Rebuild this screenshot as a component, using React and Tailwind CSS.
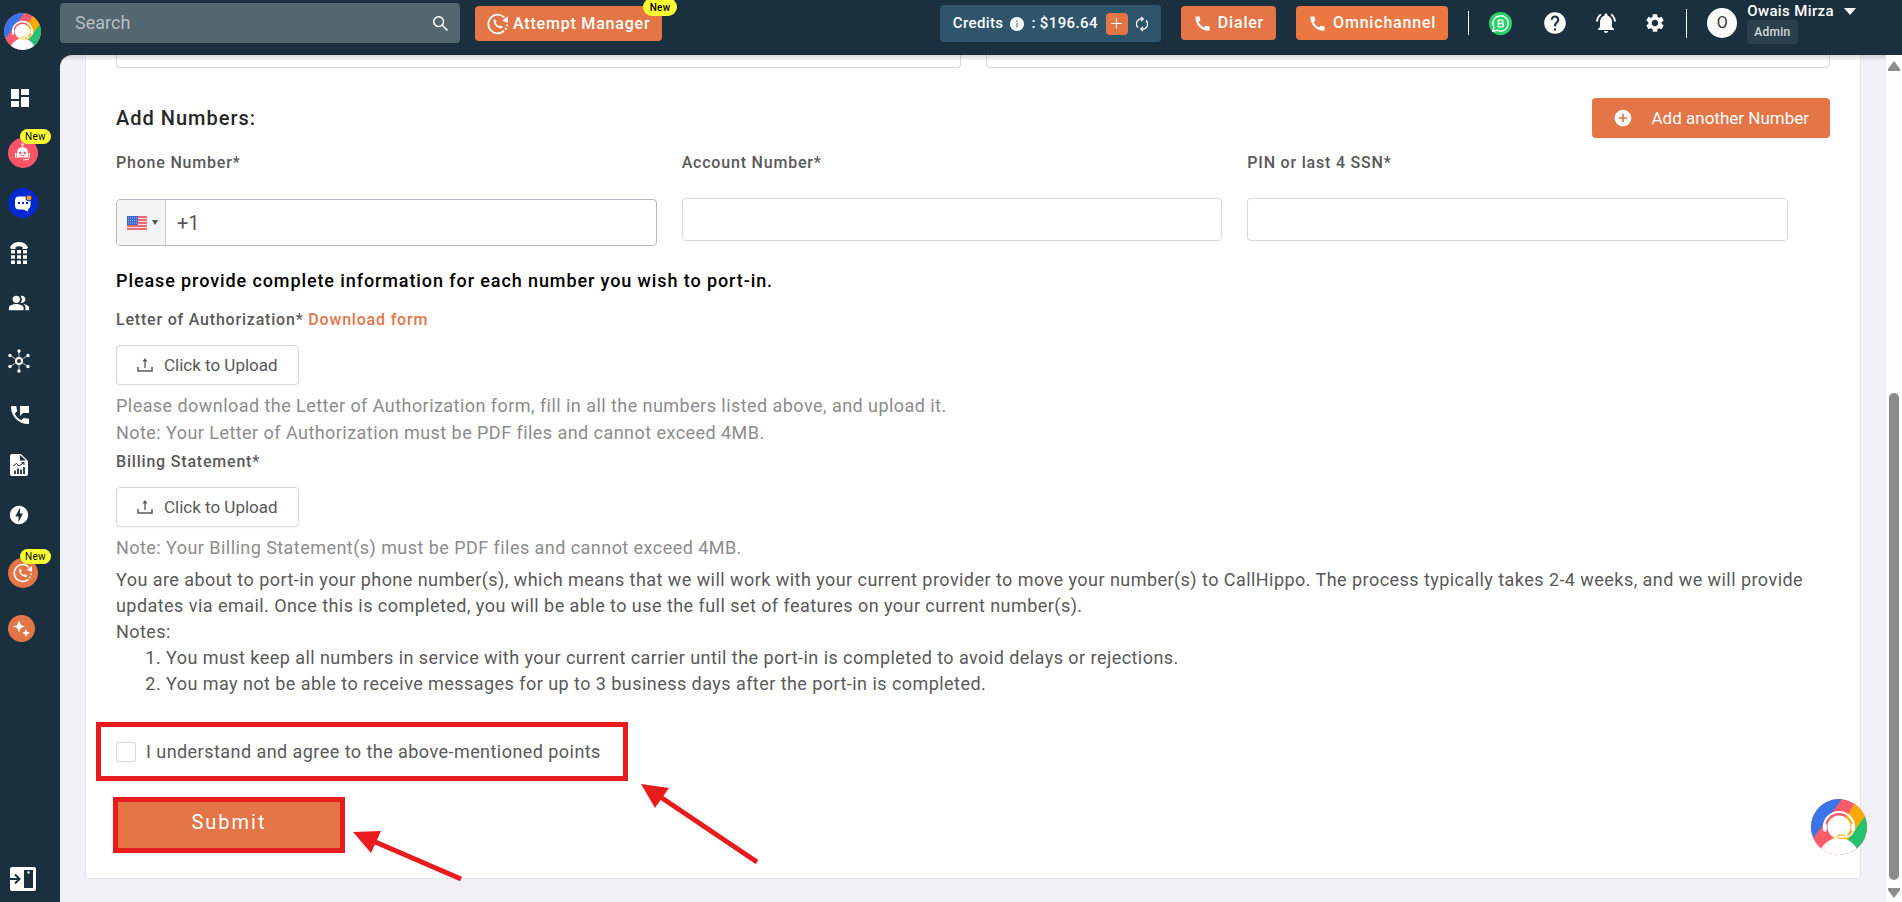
import React, { useState } from "react";
import {
  MdDashboard,
  MdPeopleAlt,
  MdPermPhoneMsg,
  MdCall,
  MdHelp,
  MdNotificationsActive,
  MdSettings,
  MdAddCircle,
  MdOfflineBolt,
} from "react-icons/md";
import { AiOutlineSearch, AiFillInfoCircle, AiOutlinePlus } from "react-icons/ai";

const LogoMark = ({ id, className }) => (
  <svg viewBox="0 0 56 56" className={className} aria-hidden="true">
    <defs>
      <clipPath id={id}>
        <circle cx="28" cy="28" r="28" />
      </clipPath>
    </defs>
    <g clipPath={`url(#${id})`}>
      <rect width="56" height="56" fill="#ff5b6b" />
      <path d="M0 0H31L3 38L0 40Z" fill="#3b73e8" />
      <path d="M44 4L55 16L32 50H14Z" fill="#ffaa00" />
      <path d="M54 17L60 14V60H26L34 45Z" fill="#25c16f" />
      <path d="M10 50C14 43 20 39 28 39S42 43 46 50V60H10Z" fill="#fff" />
      <circle cx="28" cy="28" r="11.500" fill="#fff" />
      <path d="M13 31V28A15 15 0 0 1 43 28V31" fill="none" stroke="#fff" strokeWidth="2.200" strokeLinecap="round" />
      <path d="M14 26V31M42 26V31" stroke="#fff" strokeWidth="3.500" strokeLinecap="round" />
      <path d="M42 33Q40 38 33 38" fill="none" stroke="#fff" strokeWidth="1.500" />
      <rect x="26.500" y="36" width="7" height="3.500" rx="1.700" fill="#fff" stroke="#ffaa00" />
    </g>
  </svg>
);

const RedialIcon = ({ className }) => (
  <svg viewBox="0 0 24 24" className={className} fill="none" stroke="currentColor" strokeWidth="2" aria-hidden="true">
    <path d="M18 20A10.200 10.200 0 1 1 18.500 4.500" strokeLinecap="round" />
    <path d="M22 12.500A10 10 0 0 1 19 19" strokeDasharray="2 2" />
    <path d="M22.800 3.500V10.500L16.500 8.500Z" fill="currentColor" stroke="none" />
    <path
      d="M7 8.200C7.500 13 11 16.500 15.800 17L17.300 15.400L14.800 13.500L13.300 14.500C11.500 13.700 10.300 12.500 9.500 10.700L10.500 9.200L8.600 6.700Z"
      fill="currentColor"
      stroke="none"
    />
  </svg>
);

const BotIcon = () => (
  <svg viewBox="0 0 30 30" className="size-[30px]" aria-hidden="true">
    <circle cx="15" cy="15" r="15" fill="#ff5566" />
    <path d="M14.500 6V10" stroke="#fff" />
    <circle cx="14.500" cy="6.500" r="1.200" fill="#fff" />
    <path d="M9 19.500V14.500A5.500 5.500 0 0 1 20 14.500V19.500Z" fill="#fff" />
    <path d="M7.700 15V19.500M21.300 15V19.500" stroke="#fff" strokeWidth="1.300" />
    <circle cx="12.300" cy="15" r="1.200" fill="#ff5566" />
    <circle cx="16.700" cy="15" r="1.200" fill="#ff5566" />
    <path d="M12.500 17.200Q14.500 18.800 16.500 17.200" stroke="#ff5566" fill="none" />
    <path d="M21.500 20Q21 22 15 22" stroke="#fff" fill="none" />
  </svg>
);

const ChatIcon = () => (
  <svg viewBox="0 0 30 30" className="size-[30px]" aria-hidden="true">
    <circle cx="15" cy="15" r="15" fill="#0529d0" />
    <path
      d="M11 8.500H18.500Q22.500 8.500 22.500 12.500V17.500Q22.500 20 20.500 20.500L19.800 23.500L15.500 21.500H11Q7 21.500 7 17.500V12.500Q7 8.500 11 8.500Z"
      fill="#fff"
    />
    <path d="M10 15H12M14 15H16M18 15H20" stroke="#0529d0" strokeWidth="2" />
    <circle cx="21" cy="10" r="3" fill="#ffa000" stroke="#0529d0" />
  </svg>
);

const KeypadIcon = () => (
  <svg viewBox="0 0 18 23" className="h-[23px] w-[18px]" fill="currentColor" aria-hidden="true">
    <path d="M0 6C1 2 5 0 9 0S17 2 18 6L16.500 7H12.500V5Q9 3.500 5.500 5V7H1.500Z" />
    <path d="M1 8H5V11.500H1ZM7 8H11V11.500H7ZM13 8H17V11.500H13ZM1 13.200H5V16.700H1ZM7 13.200H11V16.700H7ZM13 13.200H17V16.700H13ZM1 18.500H5V22H1ZM7 18.500H11V22H7ZM13 18.500H17V22H13Z" />
  </svg>
);

const FlowIcon = () => (
  <svg viewBox="0 0 22 24" className="h-6 w-[22px]" stroke="currentColor" fill="none" aria-hidden="true">
    <circle cx="11" cy="12" r="3" strokeWidth="2" />
    <path d="M11 8V3M11 16V21M7.500 10L3 7M14.500 10L19 7M7.500 14L3 17M14.500 14L19 17" strokeOpacity="0.700" />
    <g fill="currentColor" stroke="none">
      <circle cx="11" cy="2" r="1.700" />
      <circle cx="11" cy="22" r="1.700" />
      <circle cx="2" cy="6.500" r="1.700" />
      <circle cx="20" cy="6.500" r="1.700" />
      <circle cx="2" cy="17.500" r="1.700" />
      <circle cx="20" cy="17.500" r="1.700" />
    </g>
  </svg>
);

const ReportIcon = () => (
  <svg viewBox="0 0 18 22" className="h-[22px] w-[18px]" aria-hidden="true">
    <path d="M2 0H11L18 7V20Q18 22 16 22H2Q0 22 0 20V2Q0 0 2 0Z" fill="#fff" />
    <path d="M10 1V6.500H16" fill="#1b303e" />
    <path d="M3 12L6.500 9.500L9 12L14 8.500M11.500 8.500H14V11" stroke="#1b303e" fill="none" />
    <path d="M5 20V16.500M8 20V14.500M11 20V15.500M14 20V13" stroke="#1b303e" strokeWidth="1.800" />
  </svg>
);

const SparkleIcon = () => (
  <svg viewBox="0 0 27 27" className="size-[27px]" aria-hidden="true">
    <circle cx="13.500" cy="13.500" r="13.500" fill="#e37547" />
    <path d="M11 5.500L12.800 10L17 11.500L12.800 13L11 17.500L9.200 13L5 11.500L9.200 10Z" fill="#fff" />
    <path d="M18 14L19.200 16.800L22 18L19.200 19.200L18 22L16.800 19.200L14 18L16.800 16.800Z" fill="#fff" />
  </svg>
);

const PanelIcon = () => (
  <svg viewBox="0 0 26 24" className="h-6 w-[26px]" aria-hidden="true">
    <rect width="26" height="24" rx="2" fill="#fff" />
    <rect x="14" y="3" width="9" height="18" fill="#1b303e" />
    <circle cx="18.500" cy="5.500" r="1.300" fill="#fff" />
    <path d="M0 12H9M5 7.500L9.500 12L5 16.500" stroke="#1b303e" strokeWidth="2" fill="none" />
  </svg>
);

const WhatsappBusinessIcon = () => (
  <svg viewBox="0 0 24 24" className="size-[23px]" fill="none" aria-hidden="true">
    <circle cx="12" cy="12" r="12" fill="#25d366" />
    <path d="M4 20L5.200 16A8 8 0 1 1 8.300 19Z" stroke="#fff" strokeWidth="1.500" />
    <path d="M9.800 8.500H12.800A1.700 1.700 0 0 1 12.800 12H9.800ZM9.800 12H13.300A1.700 1.700 0 0 1 13.300 15.500H9.800Z" stroke="#fff" strokeWidth="1.500" />
  </svg>
);

const RefreshIcon = () => (
  <svg viewBox="0 0 12 16" className="h-4 w-3" fill="none" stroke="#fff" strokeWidth="1.300" aria-hidden="true">
    <path d="M2 11.500A5 5 0 0 1 6.500 3M10 4.500A5 5 0 0 1 5.500 13" />
    <path d="M5 1L7.200 3L5 5M7 11L4.800 13L7 15" />
  </svg>
);

const UploadIcon = () => (
  <svg viewBox="0 0 16 14" className="h-[14px] w-4" fill="none" stroke="currentColor" aria-hidden="true">
    <path d="M1 9V13H15V9" strokeWidth="1.500" />
    <path d="M8 10V2" strokeWidth="1.300" />
    <path d="M5.500 3.500L8 0L10.500 3.500Z" fill="currentColor" stroke="none" />
  </svg>
);

const UsFlag = () => (
  <svg viewBox="0 0 20 14" className="h-[14px] w-5" aria-hidden="true">
    <rect width="20" height="14" fill="#f7dfdf" />
    <path d="M0 1H20M0 4H20M0 7H20M0 10H20M0 13H20" stroke="#e8454c" strokeWidth="1.500" />
    <rect width="11" height="9" fill="#3f66cc" />
    <path d="M1 2H10M1 4.500H10M1 7H10" stroke="#a9bbea" strokeDasharray="1 1" />
  </svg>
);

const navItems = [
  { name: "Dashboard", icon: <MdDashboard size={24} /> },
  { name: "AI Bot", icon: <BotIcon />, isNew: true, space: "mt-[5px]" },
  { name: "Chat", icon: <ChatIcon /> },
  { name: "Numbers", icon: <KeypadIcon /> },
  { name: "Users", icon: <MdPeopleAlt size={22} /> },
  { name: "Integrations", icon: <FlowIcon />, space: "mt-2" },
  { name: "Call Logs", icon: <MdPermPhoneMsg size={24} />, space: "mt-1" },
  { name: "Reports", icon: <ReportIcon /> },
  { name: "Power Dialer", icon: <MdOfflineBolt size={22} /> },
  {
    name: "Attempt Manager",
    icon: (
      <span className="flex size-[30px] items-center justify-center rounded-full bg-[#e37547] text-white">
        <RedialIcon className="size-5" />
      </span>
    ),
    isNew: true,
    space: "mt-2",
  },
  { name: "AI Tools", icon: <SparkleIcon />, space: "mt-[5px]" },
];

const Sidebar = () => (
  <nav className="flex w-[60px] shrink-0 flex-col justify-between bg-[#1b303e] pt-[18px] pb-[11px] text-white">
    <div className="flex flex-col">
      {navItems.map(({ name, icon, isNew, space }) => (
        <a key={name} href="#" aria-label={name} className={`ml-2 flex h-[50px] items-center ${space || ""}`}>
          <span className="relative flex min-w-[22px] justify-center">
            {icon}
            {isNew && (
              <span className="absolute -top-[9px] left-3 flex h-[15px] items-center rounded-full bg-[#ffff33] px-[5px] text-[10px] tracking-wide text-black">
                New
              </span>
            )}
          </span>
        </a>
      ))}
    </div>
    <button aria-label="Expand menu" className="ml-[10px] w-[26px]">
      <PanelIcon />
    </button>
  </nav>
);

const Header = () => (
  <header className="flex h-[55px] shrink-0 items-start bg-[#1b303e] text-white">
    <a href="#" aria-label="Home" className="w-[60px] shrink-0 pt-[13px] pl-1">
      <LogoMark id="brand" className="size-[37px]" />
    </a>
    <div className="mt-[3px] flex h-10 w-[400px] items-center rounded bg-[#54666f] pr-[10px] pl-[15px]">
      <input
        aria-label="Search"
        placeholder="Search"
        className="min-w-0 flex-1 text-lg outline-none placeholder:text-[#b9bfc3]"
      />
      <AiOutlineSearch size={19} />
    </div>
    <button className="relative mt-[6px] ml-[15px] flex h-[35px] items-center gap-1 rounded bg-[#e37547] px-3 text-base font-medium tracking-wider">
      <RedialIcon className="size-[22px]" />
      Attempt Manager
      <span className="absolute -top-2 -right-[15px] flex h-[18px] items-center rounded-full bg-[#ffff33] px-[7px] text-[10px] tracking-wide text-black">
        New
      </span>
    </button>
    <div className="ml-auto flex items-start">
      <div className="mt-[5px] flex h-[37px] items-center rounded bg-[#2f556c] px-[13px] text-[15px] font-medium tracking-wide">
        Credits
        <AiFillInfoCircle size={16} className="mx-[6px]" />
        : $196.64
        <button aria-label="Add credits" className="ml-2 flex size-[22px] items-center justify-center rounded bg-[#e37547]">
          <AiOutlinePlus size={15} />
        </button>
        <button aria-label="Refresh credits" className="ml-2">
          <RefreshIcon />
        </button>
      </div>
      <button className="mt-[6px] ml-5 flex h-[34px] items-center gap-[6px] rounded bg-[#e37547] px-3 text-base font-medium tracking-wider">
        <MdCall size={19} />
        Dialer
      </button>
      <button className="mt-[6px] ml-5 flex h-[34px] items-center gap-[6px] rounded bg-[#eb7742] px-3 text-base font-medium tracking-wider">
        <MdCall size={19} />
        Omnichannel
      </button>
      <div className="flex h-[46px] items-center">
        <span className="mr-5 ml-5 h-6 w-px bg-white" />
        <a href="#" aria-label="WhatsApp Business" className="mr-[30px]">
          <WhatsappBusinessIcon />
        </a>
        <a href="#" aria-label="Help" className="mr-[26px]">
          <MdHelp size={26} />
        </a>
        <a href="#" aria-label="Notifications" className="mr-[26px]">
          <MdNotificationsActive size={24} />
        </a>
        <a href="#" aria-label="Settings" className="mr-5">
          <MdSettings size={22} />
        </a>
        <span className="mr-5 h-[29px] w-px bg-white" />
        <span className="flex size-[30px] items-center justify-center rounded-full bg-white text-base text-[#333]">O</span>
      </div>
      <div className="mr-[46px] ml-[10px]">
        <button className="flex h-5 items-center gap-[10px] pt-[2px] text-[15px] font-medium tracking-wide">
          Owais Mirza
          <svg viewBox="0 0 12 7" className="h-[7px] w-3" fill="currentColor" aria-hidden="true">
            <path d="M0 0H12L6 7Z" />
          </svg>
        </button>
        <div className="flex h-6 w-fit items-center rounded bg-[#2b404c] px-[7px] text-xs font-medium tracking-wide text-[#d5dade]">
          Admin
        </div>
      </div>
    </div>
  </header>
);

const UploadButton = () => (
  <button
    type="button"
    className="mt-[13px] mb-[7px] flex h-10 items-center gap-[11px] rounded border border-[#d9d9d9] bg-white px-5 text-[17px] tracking-normal text-[#595959] shadow-xs"
  >
    <UploadIcon />
    Click to Upload
  </button>
);

const PortForm = () => {
  const [phone, setPhone] = useState("+1");
  const [agree, setAgree] = useState(false);

  return (
    <form className="relative mx-[25px] rounded-b border border-t-0 border-[#e4e5e8] bg-white px-[30px] pb-[25px] text-lg tracking-wide text-[#595959]">
      <div className="grid grid-cols-2 gap-[25px]">
        <input aria-label="City" className="h-[13px] rounded-b border border-t-0 border-[#d9d9d9]" />
        <input aria-label="Postal code" className="h-[13px] rounded-b border border-t-0 border-[#d9d9d9]" />
      </div>

      <div className="mt-[30px] flex h-10 items-center justify-between">
        <h2 className="text-xl font-medium tracking-wider text-[#262626]">Add Numbers:</h2>
        <button
          type="button"
          className="flex h-10 items-center gap-[19px] rounded bg-[#e37547] px-[21px] text-[17px] tracking-normal text-white shadow-xs"
        >
          <MdAddCircle size={20} />
          Add another Number
        </button>
      </div>

      <div className="mt-[13px] grid grid-cols-3 gap-[25px] pr-[42px] text-base">
        <div>
          <label htmlFor="phone" className="font-medium tracking-wider">Phone Number*</label>
          <div className="mt-6 flex h-[47px] overflow-hidden rounded border border-[#b5b5c3]">
            <button
              type="button"
              aria-label="Country"
              className="flex w-[49px] items-center gap-[5px] border-r border-[#cacaca] bg-[#f4f4f4] pl-[10px]"
            >
              <UsFlag />
              <svg viewBox="0 0 6 5" className="h-[5px] w-[6px]" fill="#555" aria-hidden="true">
                <path d="M0 0H6L3 5Z" />
              </svg>
            </button>
            <input
              id="phone"
              value={phone}
              onChange={(e) => setPhone(e.target.value)}
              className="min-w-0 flex-1 px-[11px] text-xl tracking-normal outline-none"
            />
          </div>
        </div>
        <div>
          <label htmlFor="account" className="font-medium tracking-wider">Account Number*</label>
          <input id="account" className="mt-[23px] block h-[43px] w-full rounded border border-[#d9d9d9] px-3" />
        </div>
        <div>
          <label htmlFor="pin" className="font-medium tracking-wider">PIN or last 4 SSN*</label>
          <input id="pin" className="mt-[23px] block h-[43px] w-full rounded border border-[#d9d9d9] px-3" />
        </div>
      </div>

      <h3 className="mt-[21px] font-medium tracking-wider text-black">
        Please provide complete information for each number you wish to port-in.
      </h3>

      <div className="mt-[13px] text-base font-medium tracking-wider">
        Letter of Authorization* <a href="#" className="text-[#e37547]">Download form</a>
      </div>
      <UploadButton />
      <p className="leading-[27px] text-[#8c8c8c]">
        Please download the Letter of Authorization form, fill in all the numbers listed above, and upload it.
        <br />
        Note: Your Letter of Authorization must be PDF files and cannot exceed 4MB.
      </p>

      <div className="mt-1 text-base font-medium tracking-wider">Billing Statement*</div>
      <UploadButton />
      <p className="leading-[27px] text-[#8c8c8c]">Note: Your Billing Statement(s) must be PDF files and cannot exceed 4MB.</p>

      <div className="mt-[6px] leading-[26px]">
        <p>
          You are about to port-in your phone number(s), which means that we will work with your current provider to move
          your number(s) to CallHippo. The process typically takes 2-4 weeks, and we will provide updates via email. Once
          this is completed, you will be able to use the full set of features on your current number(s).
        </p>
        <p>Notes:</p>
        <ol className="list-decimal pl-[50px]">
          <li>You must keep all numbers in service with your current carrier until the port-in is completed to avoid delays or rejections.</li>
          <li>You may not be able to receive messages for up to 3 business days after the port-in is completed.</li>
        </ol>
      </div>

      <div className="relative mt-[25px] -ml-5 h-[59px] w-[532px] border-[5px] border-[#e81c1c]">
        <label className="flex h-full items-center gap-[10px] pl-[15px]">
          <input
            type="checkbox"
            checked={agree}
            onChange={(e) => setAgree(e.target.checked)}
            className="size-5 appearance-none rounded-xs border border-[#d9d9d9] bg-white checked:bg-[#e37547]"
          />
          I understand and agree to the above-mentioned points
        </label>
        <svg viewBox="0 0 118 80" className="absolute top-[57px] left-[540px] h-20 w-[118px]" aria-hidden="true">
          <path d="M0 0L28 4L14 24Z" fill="#e81c1c" />
          <path d="M18 12L116 78" stroke="#e81c1c" strokeWidth="5" />
        </svg>
      </div>

      <div className="relative mt-4 -ml-[3px] h-14 w-[232px] border-[5px] border-[#e81c1c]">
        <button type="submit" className="h-full w-full bg-[#e37547] pb-[6px] text-xl tracking-widest text-white">
          Submit
        </button>
        <svg viewBox="0 0 110 52" className="absolute top-[28px] left-[235px] h-[52px] w-[110px]" aria-hidden="true">
          <path d="M0 2L28 1L18 23Z" fill="#e81c1c" />
          <path d="M20 11L108 49" stroke="#e81c1c" strokeWidth="5" />
        </svg>
      </div>
    </form>
  );
};

const ScrollBar = () => (
  <div className="flex w-4 shrink-0 flex-col items-center bg-[#fcfcfc] py-1">
    <svg viewBox="0 0 12 10" className="mt-[2px] h-[10px] w-3" fill="#8b8b8b" aria-hidden="true">
      <path d="M6 0L12 8V10H0V8Z" />
    </svg>
    <div className="min-h-0 w-[10px] flex-[323]" />
    <div className="min-h-0 w-[10px] flex-[488] rounded-full bg-[#8b8b8b]" />
    <svg viewBox="0 0 12 10" className="mt-2 h-[10px] w-3" fill="#8b8b8b" aria-hidden="true">
      <path d="M6 10L12 2V0H0V2Z" />
    </svg>
  </div>
);

export default function App() {
  return (
    <div className="flex h-screen flex-col overflow-hidden bg-[#1b303e] font-['Roboto',sans-serif]">
      <Header />
      <div className="flex min-h-0 flex-1">
        <Sidebar />
        <main className="relative min-w-0 flex-1 overflow-hidden rounded-tl-xl bg-[#f0f2f7]">
          <PortForm />
          <div className="pointer-events-none absolute inset-x-0 top-0 h-[6px] bg-linear-to-b from-black/15 to-transparent" />
          <button aria-label="Open chat" className="absolute right-[19px] bottom-[47px]">
            <LogoMark id="chat" className="size-14" />
          </button>
        </main>
        <ScrollBar />
      </div>
    </div>
  );
}
